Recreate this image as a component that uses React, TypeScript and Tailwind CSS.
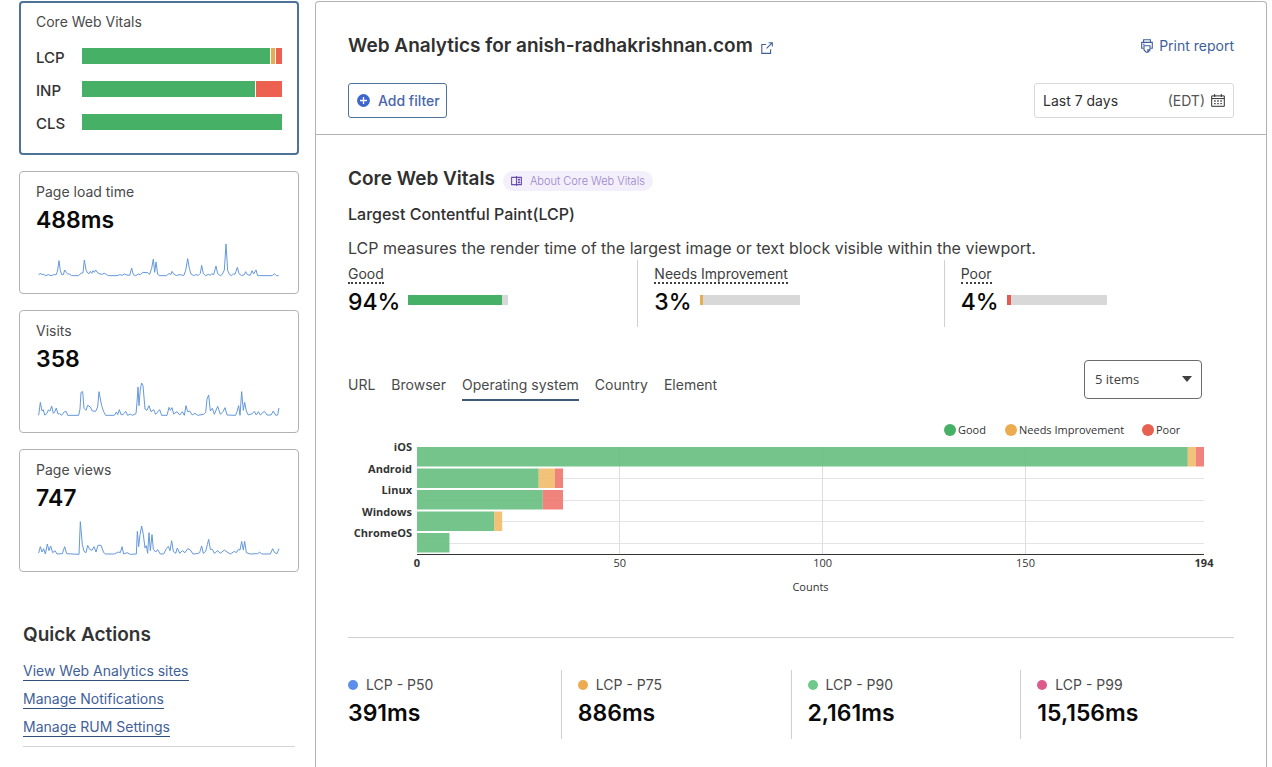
import { useState } from 'react';
import clsx from 'clsx';

const vitals = [
  { name: 'LCP', good: 94, needs: 2, poor: 3 },
  { name: 'INP', good: 87, needs: 0, poor: 13 },
  { name: 'CLS', good: 100, needs: 0, poor: 0 },
];

const metrics = [
  {
    label: 'Page load time',
    value: '488ms',
    points:
      '5,105 9,100 14,103 20,103 26,107 34,104 42,107 50,104 58,104 62,90 66,62 70,92 74,104 79,104 83,90 88,98 92,102 98,102 104,107 124,107 132,100 138,98 142,60 147,90 152,99 156,101 160,94 164,100 168,92 172,97 176,90 180,96 186,101 194,103 202,100 208,103 214,107 240,107 248,104 256,106 262,102 270,105 278,106 284,84 289,104 296,107 304,102 310,104 318,97 332,98 338,103 344,85 349,57 353,97 357,66 362,103 368,107 388,107 396,101 402,103 405,94 410,102 418,107 426,104 434,105 440,107 446,92 452,56 457,85 462,102 470,107 476,104 484,106 490,100 494,76 499,101 506,107 514,103 520,106 524,101 530,104 537,78 542,101 550,107 556,103 562,90 567,12 572,92 578,104 584,107 590,101 594,103 601,82 606,101 614,107 622,104 626,95 631,104 640,106 645,92 650,102 657,90 662,107 706,107 712,101 718,107 725,107',
  },
  {
    label: 'Visits',
    value: '358',
    points:
      '5,109 10,70 15,96 19,92 23,108 30,103 34,93 39,96 44,81 49,103 53,99 58,87 63,105 68,104 74,109 82,98 88,98 92,109 125,109 129,90 132,40 137,38 141,88 147,94 152,79 160,84 166,96 176,97 182,84 186,38 190,60 194,80 200,98 206,109 232,109 238,99 242,107 247,92 252,107 258,107 266,97 272,109 280,105 286,109 297,104 300,70 303,24 306,80 310,30 314,12 318,20 324,90 330,94 336,80 342,98 350,92 356,106 368,92 374,109 390,109 396,85 400,94 405,86 410,105 420,98 428,108 436,98 442,109 447,80 452,98 458,96 466,108 474,103 482,109 500,106 506,100 510,60 515,48 520,96 526,88 532,106 542,82 550,106 558,98 564,86 570,108 596,109 600,98 605,80 609,109 614,38 619,94 623,70 628,96 634,108 646,104 652,97 658,108 664,98 670,108 682,97 690,108 702,108 709,96 716,109 722,108 726,87',
  },
  {
    label: 'Page views',
    value: '747',
    points:
      '5,105 10,86 15,102 20,92 25,108 31,78 36,98 41,84 47,104 54,98 60,108 76,107 83,86 89,107 126,109 130,11 136,80 141,100 147,104 152,82 158,94 165,97 171,86 177,102 183,82 192,82 200,104 206,108 232,108 238,105 244,102 250,104 255,86 260,108 270,104 280,109 298,108 301,40 305,86 309,50 314,24 319,50 324,90 328,83 332,106 336,44 340,98 345,50 349,94 356,102 362,95 370,108 380,108 388,92 394,85 399,98 404,68 409,100 416,106 421,90 428,106 436,98 444,104 452,92 460,96 468,108 480,107 488,104 494,84 499,106 506,100 511,80 515,64 520,94 526,94 532,106 542,98 550,106 562,96 570,102 580,108 592,100 598,104 604,94 609,96 614,70 619,96 623,70 628,104 640,108 662,107 668,102 674,108 700,108 707,92 713,104 720,107 726,92',
  },
];

const quickActions = ['View Web Analytics sites', 'Manage Notifications', 'Manage RUM Settings'];

const ratings = [
  { label: 'Good', percent: 94, color: 'bg-[#46b066]' },
  { label: 'Needs Improvement', percent: 3, color: 'bg-[#e5ae55]' },
  { label: 'Poor', percent: 4, color: 'bg-[#e45b50]' },
];

const tabs = ['URL', 'Browser', 'Operating system', 'Country', 'Element'];

const systems = [
  { name: 'iOS', good: 190, needs: 2, poor: 2 },
  { name: 'Android', good: 30, needs: 4, poor: 2 },
  { name: 'Linux', good: 31, needs: 0, poor: 5 },
  { name: 'Windows', good: 19, needs: 2, poor: 0 },
  { name: 'ChromeOS', good: 8, needs: 0, poor: 0 },
];

const percentiles = [
  { label: 'LCP - P50', value: '391ms', color: 'bg-[#5b8fea]' },
  { label: 'LCP - P75', value: '886ms', color: 'bg-[#edab4f]' },
  { label: 'LCP - P90', value: '2,161ms', color: 'bg-[#70c98b]' },
  { label: 'LCP - P99', value: '15,156ms', color: 'bg-[#dc5a8c]' },
];

function ExternalLinkIcon() {
  return (
    <svg className="h-3 w-3" viewBox="0 0 12 12" fill="none" stroke="currentColor" strokeWidth="1.1">
      <path d="M5 2.5H.8v8.9h8.8V7.2M7.6.7h3.7v3.7M11.1.9 5.6 6.4" />
    </svg>
  );
}

function PlusIcon() {
  return (
    <svg className="h-[13px] w-[13px]" viewBox="0 0 13 13">
      <circle cx="6.5" cy="6.5" r="6.4" fill="#3d66cc" />
      <path d="M6.5 3v7M3 6.5h7" stroke="#fff" strokeWidth="1.3" />
    </svg>
  );
}

function PrinterIcon() {
  return (
    <svg className="h-[14px] w-3" viewBox="0 0 12 14" fill="none" stroke="currentColor" strokeWidth="1.1">
      <path d="M2.6 3.2V.7h6.8v2.5M2.6 9.3H.7V3.4h10.6v5.9H9.4M2 5.3h1.6" />
      <path d="M3 6.8h6v4.3L7 13.2H5.2L3 11z" />
      <path d="M6.8 13V10.9H9" />
    </svg>
  );
}

function CalendarIcon() {
  return (
    <svg className="h-[13px] w-[14px]" viewBox="0 0 14 13" fill="none" stroke="currentColor">
      <path d="M.7 1.9h12.6v10.4H.7zM.7 4.6h12.6M3.7 0v3M10.3 0v3" />
      <path d="M3.2 7h1.4M6.3 7h1.4M9.4 7h1.4M3.2 9.6h1.4M6.3 9.6h1.4M9.4 9.6h1.4" strokeWidth="1.3" />
    </svg>
  );
}

function BookIcon() {
  return (
    <svg className="h-[10px] w-[11px]" viewBox="0 0 11 10" fill="none" stroke="currentColor" strokeWidth="1.1">
      <path d="M5.5 1.4H.6v7.2h4.9M5.5 1.4h4.9v7.2H5.5M5.5 0v10" />
      <path d="M6.8 3.4h2.4M6.8 5h2.4M6.8 6.6h2.4" />
    </svg>
  );
}

function VitalsCard() {
  return (
    <button type="button" className="block w-full rounded border-2 border-[#4d7399] px-[15px] pt-[9px] pb-[13px] text-left">
      <span className="block text-sm leading-5 text-[#4a4a4a]">Core Web Vitals</span>
      <span className="mt-[9px] flex flex-col">
        {vitals.map((v) => (
          <span key={v.name} className="flex h-[33px] items-center">
            <span className="w-[46px] text-[15px] leading-5 font-medium text-[#333]">{v.name}</span>
            <span className="mb-1 flex h-4 flex-1 gap-px">
              <span className="bg-[#46b066]" style={{ flexGrow: v.good }} />
              {v.needs > 0 && <span className="bg-[#e5ae55]" style={{ flexGrow: v.needs }} />}
              {v.poor > 0 && <span className="bg-[#ec6150]" style={{ flexGrow: v.poor }} />}
            </span>
          </span>
        ))}
      </span>
    </button>
  );
}

function MetricCard({ label, value, points }: { label: string; value: string; points: string }) {
  return (
    <button type="button" className="block w-full rounded border border-[#b3b3b3] px-4 pt-[10px] pb-[11px] text-left">
      <span className="block text-sm leading-5 text-[#4a4a4a]">{label}</span>
      <span className="mt-[2px] block text-[23px] leading-8 font-semibold text-[#0a0a0a]">{value}</span>
      <svg className="mt-1 block h-auto w-full" viewBox="-3 0 738 126" fill="none" stroke="#6498dc" strokeWidth="3">
        <polyline points={points} strokeLinejoin="round" />
      </svg>
    </button>
  );
}

function Sidebar() {
  return (
    <aside className="w-[280px] shrink-0">
      <div className="flex flex-col gap-4">
        <VitalsCard />
        {metrics.map((m) => (
          <MetricCard key={m.label} {...m} />
        ))}
      </div>
      <div className="mx-1 mt-[49px] border-b border-[#d5d5d5] pb-[9px]">
        <h2 className="text-[19px] leading-7 font-semibold text-[#333]">Quick Actions</h2>
        <ul className="mt-3 flex flex-col gap-2">
          {quickActions.map((action) => (
            <li key={action} className="flex">
              <a href="#" className="border-b border-[#31507f] text-sm leading-[19px] text-[#3f5f99]">
                {action}
              </a>
            </li>
          ))}
        </ul>
      </div>
    </aside>
  );
}

function Header() {
  return (
    <header className="border-b border-[#b3b3b3] px-8 pt-[30px] pb-4">
      <div className="flex items-center justify-between">
        <h1 className="flex items-center gap-2 text-[19px] leading-7 font-semibold text-[#303030]">
          Web Analytics for anish-radhakrishnan.com
          <a href="#" aria-label="Open site" className="pt-1 text-[#3f5f99]">
            <ExternalLinkIcon />
          </a>
        </h1>
        <button type="button" className="flex items-center gap-[6px] text-sm text-[#3f5f99]">
          <PrinterIcon />
          Print report
        </button>
      </div>
      <div className="mt-[23px] flex items-center justify-between">
        <button
          type="button"
          className="flex h-[35px] items-center gap-2 rounded-[3px] border border-[#4d7399] pr-[6px] pl-2 text-sm font-medium text-[#4866ab]"
        >
          <PlusIcon />
          Add filter
        </button>
        <button
          type="button"
          className="flex h-[35px] w-[200px] items-center rounded-[3px] border border-[#d9d9d9] px-2 text-sm text-[#303030]"
        >
          Last 7 days
          <span className="mr-[6px] ml-auto text-[#555]">(EDT)</span>
          <CalendarIcon />
        </button>
      </div>
    </header>
  );
}

// Plot area inside the 886x182 drawing
const plotLeft = 69;
const plotWidth = 787;
const plotTop = 28;
const band = 21.5;
const maxCount = 194;
const scale = (count: number) => (count / maxCount) * plotWidth;

function SystemsChart() {
  const bottom = plotTop + band * systems.length;
  return (
    <svg
      className="mt-[18px] block h-auto w-full font-['Open_Sans','Noto_Sans',sans-serif] text-[11px]"
      viewBox="0 0 886 182"
      fill="#333"
      role="img"
      aria-label="Counts by operating system"
    >
      <circle cx="602" cy="11" r="6" fill="#46b066" />
      <text x="610" y="15">Good</text>
      <circle cx="663" cy="11" r="6" fill="#edab4f" />
      <text x="671" y="15">Needs Improvement</text>
      <circle cx="800" cy="11" r="6" fill="#e8604f" />
      <text x="808" y="15">Poor</text>

      {[50, 100, 150].map((tick) => (
        <g key={tick}>
          <path d={`M${Math.floor(plotLeft + scale(tick)) + 0.5} ${plotTop}V${bottom}`} stroke="#ddd" />
          <text x={plotLeft + scale(tick)} y="148" textAnchor="middle">{tick}</text>
        </g>
      ))}

      {systems.map((s, i) => {
        const y = plotTop + band * i;
        return (
          <g key={s.name}>
            {i > 0 && <path d={`M${plotLeft} ${Math.floor(y + 10) + 0.5}h${plotWidth}`} stroke="#e4e4e4" />}
            <g fillOpacity="0.9">
              <rect x={plotLeft} y={y} width={scale(s.good)} height="19.5" fill="#66be80" />
              <rect x={plotLeft + scale(s.good)} y={y} width={scale(s.needs)} height="19.5" fill="#f0bb68" />
              <rect x={plotLeft + scale(s.good + s.needs)} y={y} width={scale(s.poor)} height="19.5" fill="#ee756d" />
            </g>
            <text x="64" y={y + 4} textAnchor="end" fontWeight="700">{s.name}</text>
          </g>
        );
      })}

      <path d={`M${plotLeft} 135.5h${plotWidth}`} stroke="#333" />
      <text x={plotLeft} y="148" textAnchor="middle" fontWeight="700">0</text>
      <text x={plotLeft + plotWidth} y="148" textAnchor="middle" fontWeight="700">194</text>
      <text x={plotLeft + plotWidth / 2} y="172" textAnchor="middle">Counts</text>
    </svg>
  );
}

export default function App() {
  const [tab, setTab] = useState('Operating system');

  return (
    <div className="flex min-h-screen gap-4 bg-white pt-px pr-[5px] pl-[19px] font-[Inter,sans-serif]">
      <Sidebar />
      <main className="min-w-0 flex-1 rounded-t border border-b-0 border-[#b3b3b3]">
        <Header />
        <div className="px-8 pt-[30px]">
          <div className="flex items-center gap-2">
            <h2 className="text-[19px] leading-7 font-semibold text-[#303030]">Core Web Vitals</h2>
            <a href="#" className="mt-1 flex h-5 items-center gap-2 rounded-full bg-[#f3effb] px-2 text-[11px] font-light text-[#9a86cc]">
              <span className="text-[#6a50ac]">
                <BookIcon />
              </span>
              About Core Web Vitals
            </a>
          </div>
          <h3 className="mt-[9px] text-base leading-6 font-medium text-[#303030]">Largest Contentful Paint(LCP)</h3>
          <p className="mt-[10px] text-base leading-6 text-[#404040]">
            LCP measures the render time of the largest image or text block visible within the viewport.
          </p>

          <div className="flex">
            {ratings.map((r) => (
              <div key={r.label} className="h-[67px] flex-1 border-r border-[#d0d0d0] px-4 pt-[6px] first:pl-0 last:border-r-0 last:pr-0">
                <div className="flex">
                  <span className="border-b-2 border-dotted border-[#404040] text-sm leading-4 text-[#404040]">{r.label}</span>
                </div>
                <div className="flex items-center gap-2">
                  <span className="text-[23px] leading-9 font-medium text-[#0a0a0a]">{r.percent}%</span>
                  <span className="mb-1 h-[10px] w-[100px] bg-[#d8d8d8]">
                    <span className={clsx('block h-full', r.color)} style={{ width: `${r.percent}%` }} />
                  </span>
                </div>
              </div>
            ))}
          </div>

          <div className="mt-[33px] flex items-start justify-between pr-8">
            <div role="tablist" className="mt-[15px] flex gap-4">
              {tabs.map((t) => (
                <button
                  key={t}
                  type="button"
                  role="tab"
                  aria-selected={t === tab}
                  onClick={() => setTab(t)}
                  className={clsx(
                    'border-b-2 pb-1 text-sm leading-5 text-[#4a4a4a]',
                    t === tab ? 'border-[#3d5a7a]' : 'border-transparent',
                  )}
                >
                  {t}
                </button>
              ))}
            </div>
            <div className="relative">
              <select
                aria-label="Items shown"
                className="h-[39px] w-[118px] appearance-none rounded border border-[#6b6b6b] bg-white px-[10px] font-['Open_Sans','Noto_Sans',sans-serif] text-[13px] text-[#404040]"
              >
                <option>5 items</option>
                <option>10 items</option>
                <option>15 items</option>
              </select>
              <svg className="pointer-events-none absolute top-4 right-[10px] h-[6px] w-[10px]" viewBox="0 0 10 6" fill="#404040">
                <path d="M0 0h10L5 6z" />
              </svg>
            </div>
          </div>

          <SystemsChart />

          <div className="mt-9 flex border-t border-[#d0d0d0] pt-8">
            {percentiles.map((p) => (
              <div key={p.label} className="h-[69px] flex-1 border-r border-[#d0d0d0] px-4 pt-[5px] first:pl-0 last:border-r-0 last:pr-0">
                <div className="flex items-center gap-2 text-sm leading-5 text-[#4a4a4a]">
                  <span className={clsx('h-[10px] w-[10px] rounded-full', p.color)} />
                  {p.label}
                </div>
                <div className="mt-[2px] text-[23px] leading-8 font-semibold text-[#0a0a0a]">{p.value}</div>
              </div>
            ))}
          </div>
        </div>
      </main>
    </div>
  );
}
